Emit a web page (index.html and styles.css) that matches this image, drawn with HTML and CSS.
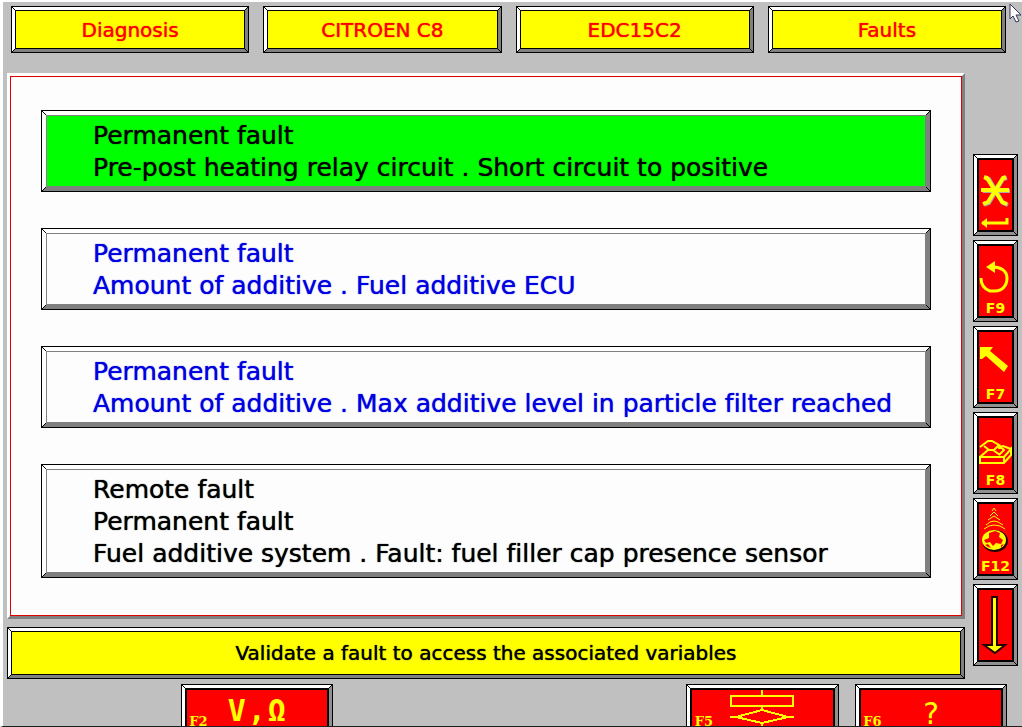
FILE: index.html
```html
<!DOCTYPE html>
<html lang="en">
<head>
<meta charset="utf-8">
<title>Diagnosis - Faults</title>
<link rel="stylesheet" href="styles.css">
</head>
<body>
<div class="screen">
  <header class="crumbs">
    <div class="crumb">Diagnosis</div>
    <div class="crumb">CITROEN C8</div>
    <div class="crumb">EDC15C2</div>
    <div class="crumb">Faults</div>
  </header>

  <div class="workspace">
    <div class="content">
      <main class="panel">
        <button class="fault fault-selected">Permanent fault<br>Pre-post heating relay circuit . Short circuit to positive</button>
        <button class="fault fault-link">Permanent fault<br>Amount of additive . Fuel additive ECU</button>
        <button class="fault fault-link">Permanent fault<br>Amount of additive . Max additive level in particle filter reached</button>
        <button class="fault">Remote fault<br>Permanent fault<br>Fuel additive system . Fault: fuel filler cap presence sensor</button>
      </main>
      <p class="message">Validate a fault to access the associated variables</p>
    </div>

    <nav class="side" aria-label="Function keys">
      <button class="key" aria-label="Validate">
        <svg class="icon-full" viewBox="0 0 33 70">
          <g fill="none" stroke="#aaa" stroke-width="4"><path d="M6 18l4 1 14 24 5 2M28 18l-4 1-14 24-5 2M4 31h27"/></g>
          <g fill="none" stroke="#ff0" stroke-width="4"><path d="M5 17l3 1 15 24 5 2M27 17l-3 1-15 24-5 2M2 30h28"/></g>
          <path d="M3 63h25v-5" fill="none" stroke="#ff0" stroke-width="3"/><path d="M2 63l6-5v10z" fill="#ff0"/>
        </svg>
      </button>
      <button class="key">
        <svg class="icon" viewBox="0 0 33 54"><path d="M14 21c8 0 14 4 14 11 0 8-5 13-12 13H11C5 43 2 39 2 32" fill="none" stroke="#ff0" stroke-width="3"/><path d="M7 21l9-6v12z" fill="#ff0"/></svg>
        <span class="key-label">F9</span>
      </button>
      <button class="key">
        <svg class="icon" viewBox="0 0 33 54"><path d="M1 15h13l-3 4 18 15-4 6L7 24l-4 3-2 0z" fill="#ff0"/></svg>
        <span class="key-label">F7</span>
      </button>
      <button class="key">
        <svg class="icon" viewBox="0 0 33 54"><path d="M1 39h24l7-8v6l-7 8H1zM1 39l8-7h5l7 5M1 29l8-6h4l7 4-5 5M5 28l5 4M20 27l5 5-5 5M19 30l5-2 8 3M25 39v6" fill="none" stroke="#ff0" stroke-width="2"/></svg>
        <span class="key-label">F8</span>
      </button>
      <button class="key">
        <svg class="icon" viewBox="0 0 33 54">
          <g fill="none" stroke="#ff0" stroke-width="1"><path d="M13 7l2-3 2 3M11 12l4-4 4 4M9 16l6-4 6 4M7 21l4-3 4-1 4 1 5 3M5 25l5-3 5-1 6 1 5 3"/></g>
          <ellipse cx="16" cy="37" rx="13" ry="11" fill="#200"/>
          <ellipse cx="15" cy="36" rx="12" ry="10" fill="#ff0"/>
          <path d="M10 29l6-2 5 2-1 4 4 3-2 4-5-1-3 3-3-4-4 1-2-3 5-2zM6 41l3-1 3 4-3-1zM22 41l3-1-3 4z" fill="#f00"/>
        </svg>
        <span class="key-label">F12</span>
      </button>
      <button class="key" aria-label="Down">
        <svg class="icon-full" viewBox="0 0 33 70"><path d="M13 7h5v48h8l-10 8-11-8h8z" fill="#ff0" stroke="#200" stroke-width="2"/></svg>
      </button>
    </nav>
  </div>

  <footer class="bottom">
    <button class="key key-wide key-volts"><span class="key-tag">F2</span><span class="symbols"><span>V</span><span>,</span><span>Ω</span></span></button>
    <button class="key key-wide key-chart"><span class="key-tag">F5</span>
      <svg class="chart" viewBox="0 0 64 44"><path d="M1 6h62v10H1zM32 0v6M32 16v4M32 20l26 7-26 6-26-6zM0 27h6M58 27h6M32 33v11" fill="none" stroke="#ff0" stroke-width="2" shape-rendering="crispEdges"/></svg>
    </button>
    <button class="key key-wide key-help"><span class="key-tag">F6</span><span class="help">?</span></button>
  </footer>

  <svg class="pointer" viewBox="0 0 13 20"><path d="M1 1v15l3-3 3 6 3-1-3-6h5z" fill="#fff" stroke="#335" stroke-width="1"/></svg>
</div>
</body>
</html>
```

FILE: styles.css
```css
* {
  box-sizing: border-box;
}

body {
  margin: 0;
  font-family: "DejaVu Sans", sans-serif;
  font-variant-ligatures: none;
}

button {
  font: inherit;
  font-variant-ligatures: none;
  color: inherit;
  padding: 0;
  border-radius: 0;
}

.screen {
  position: relative;
  display: flex;
  flex-direction: column;
  height: 100vh;
  overflow: hidden;
  background: #c0c0c0;
  border-left: 3px solid #fff;
  border-top: 2px solid #fff;
  border-bottom: 1px solid #202020;
}

/* Three-dimensional frames: black edge, light and dark bevel, inner line */
.crumb,
.message {
  border: 5px solid #000;
  border-image: url("data:image/svg+xml,%3Csvg xmlns='http://www.w3.org/2000/svg' width='15' height='15' shape-rendering='crispEdges'%3E%3Cpath d='M0 0h15v15H0z'/%3E%3Cpath fill='%23fff' d='M1 1h13l-3 3H4v7l-3 3z'/%3E%3Cpath fill='%23808080' d='M14 1v13H1l3-3h7V4z'/%3E%3Cpath stroke='%23000' d='M0 0l5 5M15 0l-5 5M0 15l5-5M15 15l-5-5'/%3E%3C/svg%3E") 5;
  background: #ff0;
}

.crumb,
.message,
.fault {
  text-shadow: 0 0 1px currentColor;
}

.crumbs {
  display: grid;
  grid-template-columns: repeat(4, 1fr);
  gap: 14px;
  padding: 4px 16px 20px 8px;
}

.crumb {
  height: 47px;
  line-height: 38px;
  font-size: 20px;
  text-align: center;
  color: #f00;
}

.workspace {
  flex: 1;
  min-height: 0;
  display: flex;
  gap: 8px;
  padding: 0 4px;
}

.content {
  flex: 1;
  min-width: 0;
  display: flex;
  flex-direction: column;
  gap: 8px;
}

.panel {
  flex: 1;
  display: flex;
  flex-direction: column;
  gap: 36px;
  padding: 34px 31px;
  background: #fdfdfd;
  border: 3px solid;
  border-color: #fff #808080 #808080 #fff;
  box-shadow: inset 0 0 0 1px #e00000;
}

.fault {
  border: 6px solid #000;
  border-image: url("data:image/svg+xml,%3Csvg xmlns='http://www.w3.org/2000/svg' width='18' height='18' shape-rendering='crispEdges'%3E%3Cpath d='M0 0h18v18H0z'/%3E%3Cpath fill='%23fff' d='M1 1h16l-4 4H5v8l-4 4z'/%3E%3Cpath fill='%23808080' d='M17 1v16H1l5-5h6V6z'/%3E%3Cpath fill='none' stroke='%23808080' d='M5.5 12.500v-7h7v7z'/%3E%3Cpath stroke='%23000' d='M0 0l5 5M18 0l-5 5M0 18l5-5M18 18l-5-5'/%3E%3C/svg%3E") 6;
  background: #fdfdfd;
  padding: 4px 0 2px 46px;
  font-size: 25px;
  line-height: 32px;
  text-align: left;
  white-space: nowrap;
  color: #000;
}

.fault-selected {
  background: #0f0;
}

.fault-link {
  color: #0000e0;
}

.message {
  margin: 0;
  height: 52px;
  line-height: 42px;
  font-size: 20px;
  text-align: center;
  color: #000;
}

.side {
  width: 45px;
  display: flex;
  flex-direction: column;
  gap: 4px;
  padding-top: 81px;
}

.key {
  display: flex;
  flex-direction: column;
  align-items: center;
  height: 82px;
  border: 6px solid #000;
  border-image: url("data:image/svg+xml,%3Csvg xmlns='http://www.w3.org/2000/svg' width='18' height='18' shape-rendering='crispEdges'%3E%3Cpath d='M0 0h18v18H0z'/%3E%3Cpath fill='%23fff' d='M1 1h16l-3 3H4v10l-3 3z'/%3E%3Cpath fill='%23909090' d='M17 1v16H1l3-3h10V4z'/%3E%3Cpath stroke='%23000' d='M1 1l4 4M17 1l-4 4M1 17l4-4M17 17l-4-4'/%3E%3C/svg%3E") 6;
  background: #f00;
  color: #ff0;
}

.icon {
  width: 33px;
  height: 54px;
}

.icon-full {
  width: 33px;
  height: 70px;
}

.key-label {
  font-size: 14px;
  font-weight: bold;
  line-height: 16px;
}

.bottom {
  display: grid;
  grid-template-columns: repeat(6, 1fr);
  gap: 16px;
  height: 42px;
  margin-top: 5px;
  padding: 0 15px 0 9px;
}

.key-wide {
  display: grid;
  grid-template-columns: 24px 1fr 24px;
  align-items: start;
  justify-items: center;
}

.key-volts {
  grid-column: 2;
}

.key-chart {
  grid-column: 5;
}

.key-help {
  grid-column: 6;
}

.key-tag {
  padding-top: 22px;
  font-family: "DejaVu Serif", serif;
  font-size: 13px;
  font-weight: bold;
  line-height: 20px;
}

.symbols {
  display: flex;
  gap: 2px;
  font-family: "DejaVu Sans Mono", monospace;
  font-size: 30px;
  font-weight: bold;
  line-height: 42px;
}

.chart {
  width: 64px;
  height: 44px;
}

.help {
  font-family: "DejaVu Sans Mono", monospace;
  font-size: 30px;
  line-height: 48px;
}

.pointer {
  position: absolute;
  top: 1px;
  right: 0;
  width: 13px;
  height: 20px;
}
```
